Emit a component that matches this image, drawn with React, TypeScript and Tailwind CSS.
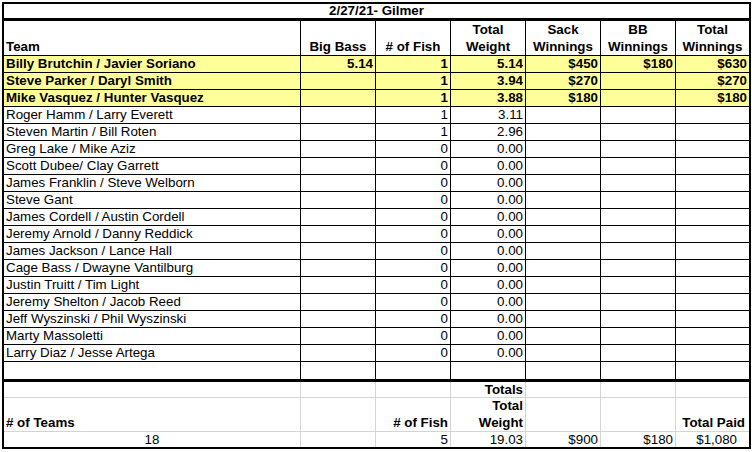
import React from "react";

type Row = { name: string; cells: string[]; hi?: boolean };

const data: Row[] = [
  { name: "Billy Brutchin / Javier Soriano", cells: ["5.14", "1", "5.14", "$450", "$180", "$630"], hi: true },
  { name: "Steve Parker / Daryl Smith", cells: ["", "1", "3.94", "$270", "", "$270"], hi: true },
  { name: "Mike Vasquez / Hunter Vasquez", cells: ["", "1", "3.88", "$180", "", "$180"], hi: true },
  { name: "Roger Hamm / Larry Everett", cells: ["", "1", "3.11", "", "", ""] },
  { name: "Steven Martin / Bill Roten", cells: ["", "1", "2.96", "", "", ""] },
  { name: "Greg Lake / Mike Aziz", cells: ["", "0", "0.00", "", "", ""] },
  { name: "Scott Dubee/ Clay Garrett", cells: ["", "0", "0.00", "", "", ""] },
  { name: "James Franklin / Steve Welborn", cells: ["", "0", "0.00", "", "", ""] },
  { name: "Steve Gant", cells: ["", "0", "0.00", "", "", ""] },
  { name: "James Cordell / Austin Cordell", cells: ["", "0", "0.00", "", "", ""] },
  { name: "Jeremy Arnold / Danny Reddick", cells: ["", "0", "0.00", "", "", ""] },
  { name: "James Jackson / Lance Hall", cells: ["", "0", "0.00", "", "", ""] },
  { name: "Cage Bass / Dwayne Vantilburg", cells: ["", "0", "0.00", "", "", ""] },
  { name: "Justin Truitt / Tim Light", cells: ["", "0", "0.00", "", "", ""] },
  { name: "Jeremy Shelton / Jacob Reed", cells: ["", "0", "0.00", "", "", ""] },
  { name: "Jeff Wyszinski / Phil Wyszinski", cells: ["", "0", "0.00", "", "", ""] },
  { name: "Marty Massoletti", cells: ["", "0", "0.00", "", "", ""] },
  { name: "Larry Diaz / Jesse Artega", cells: ["", "0", "0.00", "", "", ""] },
];

const colW = ["w-[75px] border-r", "w-[75px] border-r", "w-[75px] border-r", "w-[75px] border-r", "w-[75px] border-r", "w-[73px]"];

export default function App() {
  return (
    <div className="w-[752px] h-[452px] bg-white overflow-hidden font-['Liberation_Sans',Arial,sans-serif] text-[13.33px] text-black">
      <div className="ml-[2px] mt-[2px] w-[749px] border-2 border-black">
        {/* Title */}
        <div className="h-[17px] border-b-[3px] border-black flex items-center justify-center font-bold leading-[14px]">
          2/27/21- Gilmer
        </div>
        {/* Header */}
        <div className="h-[35px] flex border-b border-black font-bold leading-[17px]">
          <div className="w-[297px] border-r border-black flex items-end pl-[2px]">Team</div>
          <div className="w-[75px] border-r border-black flex items-end justify-center">Big Bass</div>
          <div className="w-[75px] border-r border-black flex items-end justify-center"># of Fish</div>
          <div className="w-[75px] border-r border-black flex flex-col justify-end items-center">
            <span>Total</span>
            <span>Weight</span>
          </div>
          <div className="w-[75px] border-r border-black flex flex-col justify-end items-center">
            <span>Sack</span>
            <span>Winnings</span>
          </div>
          <div className="w-[75px] border-r border-black flex flex-col justify-end items-center">
            <span>BB</span>
            <span>Winnings</span>
          </div>
          <div className="w-[73px] flex flex-col justify-end items-center">
            <span>Total</span>
            <span>Winnings</span>
          </div>
        </div>
        {/* Data rows */}
        {data.map((r) => (
          <div
            key={r.name}
            className={`h-[17px] flex border-b border-black leading-[16px] ${r.hi ? "bg-[#ffff99] font-bold" : ""}`}
          >
            <div className="w-[297px] border-r border-black pl-[2px] whitespace-nowrap">{r.name}</div>
            {r.cells.map((c, i) => (
              <div key={i} className={`${colW[i]} border-black text-right pr-[2px]`}>
                {c}
              </div>
            ))}
          </div>
        ))}
        {/* Empty row */}
        <div className="h-[20px] flex border-b-[3px] border-black">
          <div className="w-[297px] border-r border-black" />
          {colW.map((w, i) => (
            <div key={i} className={`${w} border-black`} />
          ))}
        </div>
        {/* Footer */}
        <div className="h-[16px] flex border-b border-[#d4d4d4] leading-[15px] font-bold">
          <div className="w-[297px] border-r border-[#d4d4d4]" />
          <div className="w-[75px] border-r border-[#d4d4d4]" />
          <div className="w-[75px] border-r border-[#d4d4d4]" />
          <div className="w-[75px] border-r border-[#d4d4d4] text-right pr-[2px]">Totals</div>
          <div className="w-[75px] border-r border-[#d4d4d4]" />
          <div className="w-[75px] border-r border-[#d4d4d4]" />
          <div className="w-[73px]" />
        </div>
        <div className="h-[34px] flex border-b border-[#d4d4d4] leading-[17px] font-bold">
          <div className="w-[297px] border-r border-[#d4d4d4] flex items-end pl-[2px]"># of Teams</div>
          <div className="w-[75px] border-r border-[#d4d4d4]" />
          <div className="w-[75px] border-r border-[#d4d4d4] flex items-end justify-end pr-[2px]"># of Fish</div>
          <div className="w-[75px] border-r border-[#d4d4d4] flex flex-col justify-end items-end pr-[2px]">
            <span>Total</span>
            <span>Weight</span>
          </div>
          <div className="w-[75px] border-r border-[#d4d4d4]" />
          <div className="w-[75px] border-r border-[#d4d4d4]" />
          <div className="w-[73px] flex items-end justify-end pr-[4px]">Total Paid</div>
        </div>
        <div className="h-[15px] flex leading-[15px]">
          <div className="w-[297px] border-r border-[#d4d4d4] text-center">18</div>
          <div className="w-[75px] border-r border-[#d4d4d4]" />
          <div className="w-[75px] border-r border-[#d4d4d4] text-right pr-[2px]">5</div>
          <div className="w-[75px] border-r border-[#d4d4d4] text-right pr-[2px]">19.03</div>
          <div className="w-[75px] border-r border-[#d4d4d4] text-right pr-[2px]">$900</div>
          <div className="w-[75px] border-r border-[#d4d4d4] text-right pr-[2px]">$180</div>
          <div className="w-[73px] text-right pr-[12px]">$1,080</div>
        </div>
      </div>
    </div>
  );
}
